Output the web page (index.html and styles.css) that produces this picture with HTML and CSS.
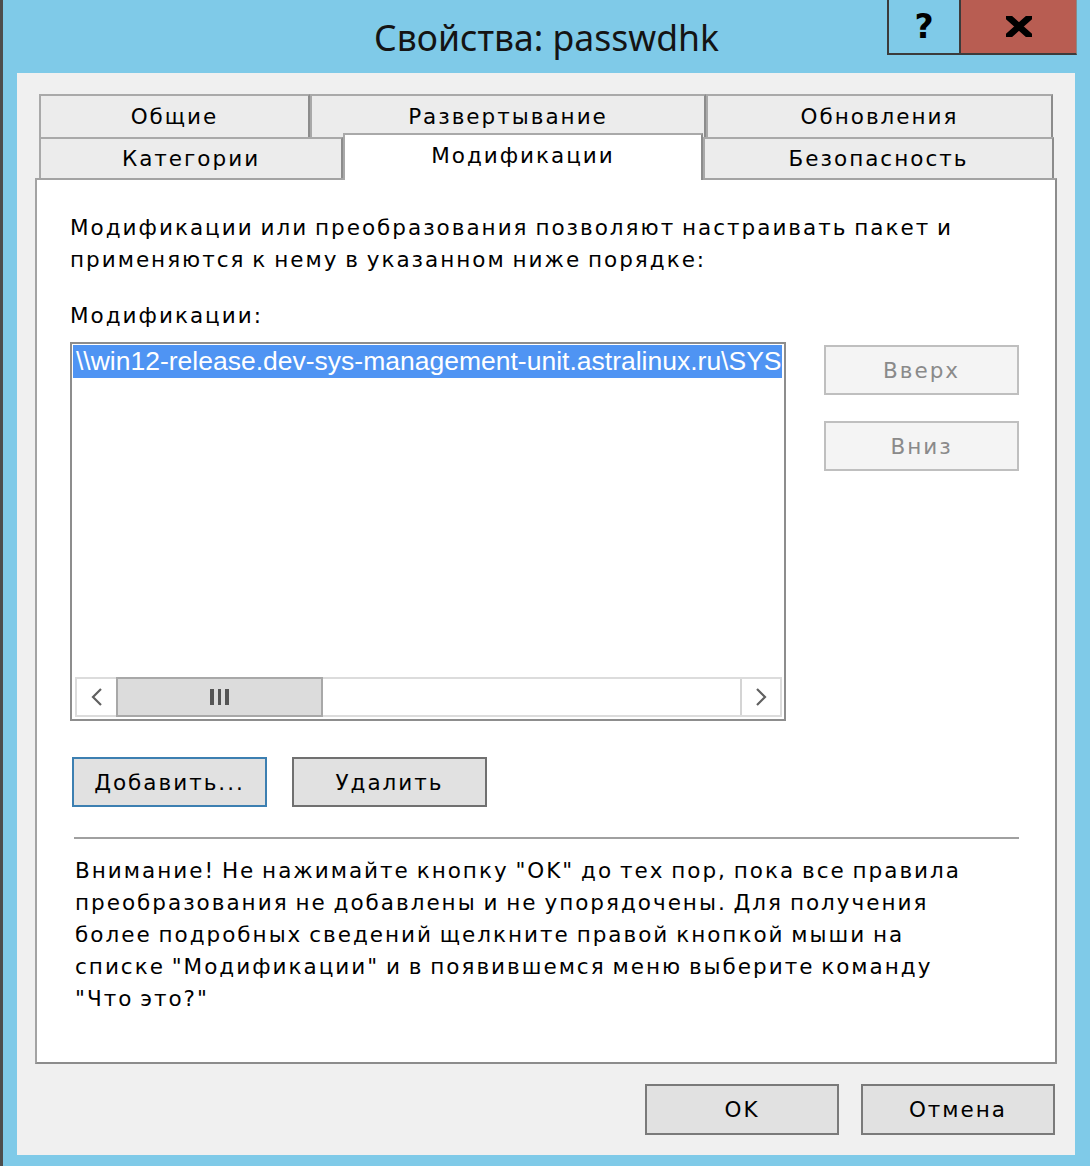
FILE: index.html
```html
<!DOCTYPE html>
<html lang="ru">
<head>
<meta charset="utf-8">
<title>Свойства: passwdhk</title>
<link rel="stylesheet" href="styles.css">
</head>
<body>
<div class="window">
  <div class="titlebar">
    <div class="title">Свойства: passwdhk</div>
    <div class="controls">
      <div class="btn-help">?</div>
      <div class="btn-close">
        <svg width="26" height="21" viewBox="0 0 26 21"><path d="M-1 -2 L27 23 M27 -2 L-1 23" stroke="#000" stroke-width="6.5" fill="none"/></svg>
      </div>
    </div>
  </div>
  <div class="client">
    <div class="tabs">
      <div class="tab-row row1">
        <div class="tab t-general">Общие</div>
        <div class="tab t-deploy">Развертывание</div>
        <div class="tab t-updates">Обновления</div>
      </div>
      <div class="tab-row row2">
        <div class="tab t-cat">Категории</div>
        <div class="tab t-mod selected">Модификации</div>
        <div class="tab t-sec">Безопасность</div>
      </div>
    </div>
    <div class="panel">
      <p class="intro">Модификации или преобразования позволяют настраивать пакет и<br>применяются к нему в указанном ниже порядке:</p>
      <div class="label">Модификации:</div>
      <div class="list-row">
        <div class="listbox">
          <div class="item"><span class="item-text">\\win12-release.dev-sys-management-unit.astralinux.ru\SYS</span></div>
          <div class="list-space"></div>
          <div class="hscroll">
            <div class="sb-btn"><svg width="14" height="18" viewBox="0 0 14 18"><path d="M11 1 L3 9 L11 17" stroke="#606060" stroke-width="2.2" fill="none"/></svg></div>
            <div class="sb-thumb"><span class="grip"></span><span class="grip"></span><span class="grip"></span></div>
            <div class="sb-track"></div>
            <div class="sb-btn sb-right"><svg width="14" height="18" viewBox="0 0 14 18"><path d="M3 1 L11 9 L3 17" stroke="#606060" stroke-width="2.2" fill="none"/></svg></div>
          </div>
        </div>
        <div class="side-buttons">
          <div class="btn disabled">Вверх</div>
          <div class="btn disabled">Вниз</div>
        </div>
      </div>
      <div class="btn-row">
        <div class="btn default">Добавить...</div>
        <div class="btn">Удалить</div>
      </div>
      <div class="separator"></div>
      <p class="warning">Внимание! Не нажимайте кнопку "OK" до тех пор, пока все правила<br>преобразования не добавлены и не упорядочены. Для получения<br>более подробных сведений щелкните правой кнопкой мыши на<br>списке "Модификации" и в появившемся меню выберите команду<br>"Что это?"</p>
    </div>
    <div class="footer">
      <div class="btn footer-btn">OK</div>
      <div class="btn footer-btn">Отмена</div>
    </div>
  </div>
</div>
</body>
</html>
```
FILE: styles.css
```css
* { box-sizing: border-box; }
html, body { margin: 0; padding: 0; }
body {
  width: 1090px;
  height: 1166px;
  overflow: hidden;
  background: #7fcae8;
  font-family: "DejaVu Sans", sans-serif;
  color: #000;
}
.window {
  width: 1090px;
  height: 1166px;
  background: #7fcae8;
  border-left: 3px solid #4d4d4d;
  display: flex;
  flex-direction: column;
}
.titlebar {
  height: 73px;
  flex: none;
  display: grid;
  grid-template-columns: 1fr auto 1fr;
  align-items: start;
}
.title {
  grid-column: 2;
  font-family: "Noto Sans", "Open Sans", sans-serif;
  font-size: 35.5px;
  line-height: 73px;
  padding-top: 1px;
  color: #141414;
  white-space: nowrap;
}
.controls {
  grid-column: 3;
  justify-self: end;
  margin-right: 13px;
  display: flex;
  height: 55px;
}
.btn-help {
  width: 72px;
  height: 55px;
  border-left: 2px solid #3b3b3b;
  border-bottom: 2px solid #3b3b3b;
  display: flex;
  align-items: center;
  justify-content: center;
  font-family: "DejaVu Sans", sans-serif;
  font-weight: bold;
  font-size: 33px;
  color: #000;
}
.btn-close {
  width: 118px;
  height: 55px;
  background: #b85d52;
  border-left: 2px solid #3b3b3b;
  border-bottom: 2px solid #3b3b3b;
  border-right: 1px solid #8a8a8a;
  display: flex;
  align-items: center;
  justify-content: center;
}
.client {
  margin-left: 14px;
  width: 1058px;
  height: 1082px;
  flex: none;
  background: #f0f0f0;
  padding: 21px 18px 0 18px;
  display: flex;
  flex-direction: column;
}
.tabs {
  margin: 0 3px 0 4px;
  display: flex;
  flex-direction: column;
}
.tab-row { display: flex; }
.tab {
  background: #ececec;
  border: 2px solid #a9a9a9;
  border-bottom: none;
  border-right-color: #8c8c8c;
  display: flex;
  align-items: center;
  justify-content: center;
  font-size: 21.5px;
  letter-spacing: 2px;
  white-space: nowrap;
}
.row1 .tab { height: 43px; }
.row2 .tab { height: 41px; }
.t-general { width: 271px; }
.t-deploy { width: 396px; }
.t-updates { width: 347px; }
.t-cat { width: 304px; }
.t-mod { width: 360px; }
.t-sec { width: 351px; }
.row2 .tab.selected {
  background: #fff;
  height: 47px;
  margin-top: -4px;
  margin-bottom: -2px;
  padding-bottom: 4px;
  position: relative;
  z-index: 1;
}
.panel {
  height: 886px;
  flex: none;
  background: #fff;
  border: 2px solid #a3a3a3;
  border-right-color: #8c8c8c;
  border-bottom-color: #8c8c8c;
  padding: 32px 36px 0 33px;
  display: flex;
  flex-direction: column;
}
.intro, .warning {
  margin: 0;
  font-size: 21.5px;
  line-height: 32px;
  letter-spacing: 2px;
  word-spacing: -2px;
  white-space: nowrap;
}
.label {
  margin-top: 24px;
  font-size: 21.5px;
  line-height: 32px;
  letter-spacing: 2px;
}
.list-row {
  margin-top: 10px;
  display: flex;
  gap: 38px;
}
.listbox {
  width: 716px;
  height: 379px;
  border: 2px solid #8d8d8d;
  padding: 1px 2px 0 1px;
  display: flex;
  flex-direction: column;
}
.item {
  height: 33px;
  background: #4f94f3;
  color: #fff;
  font-family: "Liberation Sans", Arial, sans-serif;
  font-size: 26.5px;
  line-height: 33px;
  padding-left: 3px;
  white-space: nowrap;
  overflow: hidden;
}
.list-space { flex: 1; }
.hscroll {
  height: 40px;
  margin: 0 0 2px 2px;
  display: flex;
  border-top: 2px solid #dcdcdc;
  border-bottom: 2px solid #dcdcdc;
  background: #fff;
}
.sb-btn {
  width: 41px;
  display: flex;
  align-items: center;
  justify-content: center;
  background: #fff;
  border-left: 2px solid #dcdcdc;
}
.sb-right {
  width: 42px;
  border-left: 2px solid #d4d4d4;
  border-right: 2px solid #dcdcdc;
}
.sb-thumb {
  width: 207px;
  margin: -2px 0;
  background: #dcdcdc;
  border: 2px solid #a8a8a8;
  display: flex;
  align-items: center;
  justify-content: center;
  gap: 4px;
}
.grip {
  width: 3.5px;
  height: 16px;
  background: #555;
}
.sb-track { flex: 1; background: #fff; }
.side-buttons {
  padding-top: 3px;
  display: flex;
  flex-direction: column;
  gap: 26px;
}
.btn {
  width: 195px;
  height: 50px;
  background: #e1e1e1;
  border: 2px solid #707070;
  display: flex;
  align-items: center;
  justify-content: center;
  font-size: 21.5px;
  letter-spacing: 2px;
  white-space: nowrap;
}
.btn.disabled {
  background: #f4f4f4;
  border-color: #bfbfbf;
  color: #8a8a8a;
}
.btn.default { border-color: #3c7fb1; }
.btn-row {
  margin-top: 36px;
  margin-left: 2px;
  display: flex;
  gap: 25px;
}
.separator {
  margin-top: 30px;
  margin-left: 4px;
  height: 2px;
  background: #a0a0a0;
}
.warning {
  margin-top: 16px;
  padding-left: 5px;
}
.footer {
  margin-top: 20px;
  padding-right: 2px;
  display: flex;
  justify-content: flex-end;
  gap: 22px;
}
.footer-btn {
  width: 194px;
  height: 51px;
  border-color: #7a7a7a;
}
```
